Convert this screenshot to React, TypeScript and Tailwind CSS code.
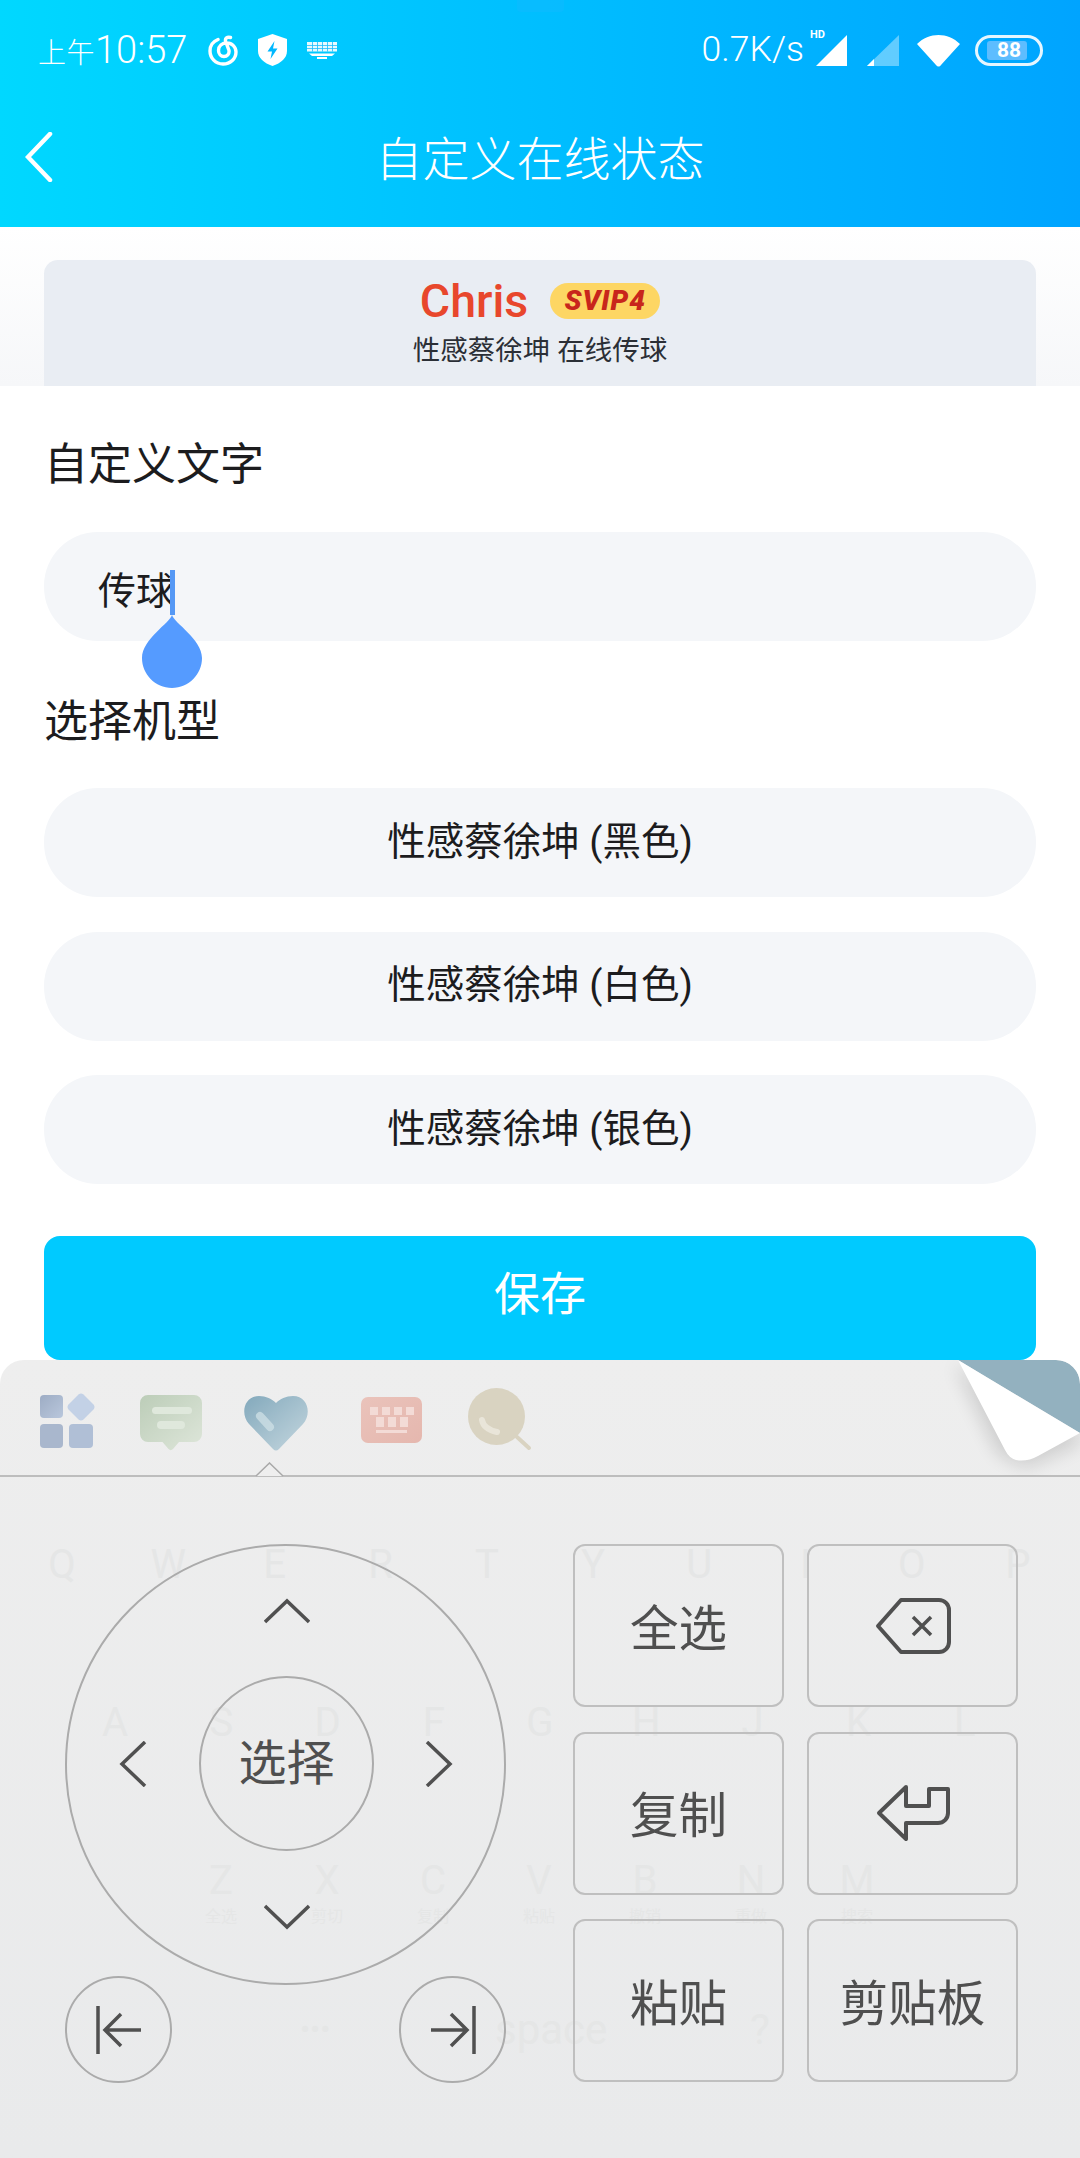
import React from 'react'

const modelRows = ['性感蔡徐坤 (黑色)', '性感蔡徐坤 (白色)', '性感蔡徐坤 (银色)']

const ghostTop = ['Q', 'W', 'E', 'R', 'T', 'Y', 'U', 'I', 'O', 'P']
const ghostMid = ['A', 'S', 'D', 'F', 'G', 'H', 'J', 'K', 'L']
const ghostBottom = [
  ['Z', '全选'],
  ['X', '剪切'],
  ['C', '复制'],
  ['V', '粘贴'],
  ['B', '撤销'],
  ['N', '重做'],
  ['M', '搜索'],
]

const StatusBar = () => (
  <div className="flex h-[100px] items-center justify-between pl-[38px] pr-[37px] text-white">
    <div className="flex items-center">
      <div className="flex w-[152px] items-baseline font-light">
        <span className="text-[28px] tracking-[0.5px]">上午</span>
        <span className="text-[38px]">10:57</span>
      </div>
      <svg className="ml-[18px]" width="30" height="31" viewBox="0 0 30 31" fill="none" stroke="#fff" strokeWidth="3.4" strokeLinecap="round">
        <path d="M10 4.500C5 6.500 2 10.500 2 16c0 7 5.500 13 13 13s13-5.500 13-12c0-5-4-9-9-9s-8.500 3-8.500 7.500c0 3.500 2.500 6 5.500 6s5.500-2.500 5-6L17.500 6c-.5-2.500 1.500-4.500 5-3.500" />
      </svg>
      <svg className="ml-[20px]" width="29" height="32" viewBox="0 0 29 32">
        <path d="M14.500 0 29 5v12c0 7-6 12-14.500 15C6 29 0 24 0 17V5z" fill="#fff" />
        <path d="M16.500 7 9.500 17.500h4.500L12.500 25l7-10.500H15z" fill="#00b8ff" />
      </svg>
      <svg className="ml-[20px]" width="30" height="17" viewBox="0 0 30 17" fill="#fff">
        <path d="M0 0h30v9.500H0z" opacity="0.9" />
        <path d="M2 11.500h26L25 14H5z" />
        <path d="M10 15h10v2H10z" />
        <path d="M0 3h30v.8H0zM0 6h30v.8H0zM5 0h.8v9.500H5zM10 0h.8v9.500H10zM15 0h.8v9.500H15zM20 0h.8v9.500H20zM25 0h.8v9.500H25z" fill="#19bcff" />
      </svg>
    </div>
    <div className="flex items-center">
      <span className="text-[35.500px] font-light">0.7K/s</span>
      <div className="relative ml-[12px] h-[31px] w-[31px]">
        <span className="absolute left-[-6px] top-[-6px] text-[11px] font-bold leading-none">HD</span>
        <svg width="31" height="31" viewBox="0 0 31 31" fill="#fff">
          <path d="M31 0v31H0z" />
        </svg>
      </div>
      <svg className="ml-[20px]" width="32" height="31" viewBox="0 0 32 31">
        <path d="M32 0v31H0z" fill="#fff" opacity="0.38" />
        <path d="M7 24v7H0z" fill="#fff" />
      </svg>
      <svg className="ml-[18px]" width="43" height="33" viewBox="0 0 43 33" fill="#fff">
        <path d="M0 10C12-2 31-2 43 10L24 31c-1.500 2-3.500 2-5 0z" />
      </svg>
      <div className="relative ml-[15px] flex h-[31px] w-[68px] items-center justify-center rounded-full border-[3px] border-white/90">
        <div className="absolute bottom-[3px] left-[9px] top-[3px] w-[40px] rounded-[3px] bg-[#5dbdff]" />
        <span className="relative text-[21px] font-bold leading-none">88</span>
      </div>
    </div>
  </div>
)

const Form = () => (
  <div className="flex flex-col px-[44px]">
    <div className="mt-[49px] h-[60px] text-[44px] leading-[60px] text-[#1c1c1e]">自定义文字</div>
    <div className="relative mt-[37px] flex h-[109px] items-center rounded-[54px] bg-[#f4f6f9] pl-[54px] pt-[10px] text-[38px] text-[#1c1c1e]">
      <span>传球</span>
      <div className="absolute left-[126px] top-[38px] h-[45px] w-[5px] bg-[#5598f5]" />
      <svg className="absolute left-[98px] top-[83px]" width="60" height="73" viewBox="0 0 60 73" fill="#559bff">
        <path d="M30 0C32 8 60 24 60 43c0 16-13 30-30 30S0 59 0 43C0 24 28 8 30 0z" />
      </svg>
    </div>
    <div className="mt-[51px] h-[60px] text-[44px] leading-[60px] text-[#1c1c1e]">选择机型</div>
    <div className="mt-[36px] flex flex-col gap-[34.500px]">
      {modelRows.map((name) => (
        <div key={name} className="flex h-[109px] items-center justify-center rounded-[54px] bg-[#f4f6f9] pb-[2px] text-[38.500px] text-[#1c1c1e]">
          {name}
        </div>
      ))}
    </div>
    <div className="mt-[52px] flex h-[124px] items-center justify-center rounded-[16px] bg-[#00caff] pb-[8px] text-[46px] text-white">保存</div>
  </div>
)

const TabIcons = () => (
  <div className="flex h-[115px] items-start pl-[38px] pt-[26px]">
    <svg width="60" height="64" viewBox="0 0 60 64">
      <defs>
        <linearGradient id="grid" x1="0" y1="0" x2="1" y2="1">
          <stop offset="0" stopColor="#9dacc4" />
          <stop offset="1" stopColor="#b9c7dc" />
        </linearGradient>
      </defs>
      <rect x="2" y="9" width="23" height="23" rx="4" fill="url(#grid)" />
      <path d="M40.500 8.500a4 4 0 0 1 5 0l10 10a4 4 0 0 1 0 5l-10 10a4 4 0 0 1-5 0l-10-10a4 4 0 0 1 0-5z" fill="#c3d1e6" />
      <rect x="2" y="38" width="23" height="24" rx="4" fill="#a9b7cd" />
      <rect x="31" y="38" width="24" height="24" rx="4" fill="#b0bfd6" />
    </svg>
    <svg className="ml-[42px]" width="62" height="66" viewBox="0 0 62 66">
      <defs>
        <linearGradient id="chat" x1="0" y1="0" x2="1" y2="1">
          <stop offset="0" stopColor="#bccdb8" />
          <stop offset="1" stopColor="#dee6da" />
        </linearGradient>
      </defs>
      <path d="M8 9h46a8 8 0 0 1 8 8v31a8 8 0 0 1-8 8H39l-6 7c-1.500 1.500-3 1.500-4.500 0l-6-7H8a8 8 0 0 1-8-8V17a8 8 0 0 1 8-8z" fill="url(#chat)" />
      <rect x="12" y="21" width="40" height="7" rx="3.500" fill="#dfe8dc" />
      <rect x="17" y="35" width="28" height="8" rx="4" fill="#dfe8dc" />
    </svg>
    <svg className="ml-[42px]" width="64" height="66" viewBox="0 0 64 66">
      <defs>
        <linearGradient id="heart" x1="0" y1="0" x2="1" y2="1">
          <stop offset="0" stopColor="#83a9bc" />
          <stop offset="1" stopColor="#c5d7df" />
        </linearGradient>
      </defs>
      <path d="M29 63 5 38C-4 28 0 10 15 10c7 0 13 3 17 7 4-4 10-7 17-7 15 0 19 18 10 28L35 63c-2 2-4 2-6 0z" fill="url(#heart)" />
      <path d="M16 30 26 41" stroke="#cfe0e6" strokeOpacity="0.75" strokeWidth="8" strokeLinecap="round" />
    </svg>
    <svg className="ml-[53px]" width="62" height="62" viewBox="0 0 62 62">
      <defs>
        <linearGradient id="keys" x1="0" y1="0" x2="1" y2="1">
          <stop offset="0" stopColor="#eac3bb" />
          <stop offset="1" stopColor="#e5b7ae" />
        </linearGradient>
      </defs>
      <rect x="0" y="11" width="61" height="46" rx="7" fill="url(#keys)" />
      <path d="M9 21h8v8H9zM21 21h8v8h-8zM33 21h8v8h-8zM45 21h8v8h-8zM15 31h8v10h-8zM27 31h8v10h-8zM39 31h8v10h-8zM15 44h31v3H15z" fill="#f3dbd6" />
    </svg>
    <svg className="ml-[45px]" width="64" height="66" viewBox="0 0 64 66">
      <circle cx="28.500" cy="30.500" r="28.500" fill="#d9d3c1" />
      <path d="M49 51 61 62" stroke="#d9d3c1" strokeWidth="4" strokeLinecap="round" />
      <path d="M14 34c1 6 6 10 15 12" stroke="#e9e5d9" strokeWidth="6" fill="none" strokeLinecap="round" />
    </svg>
  </div>
)

const PageCurl = () => (
  <svg className="absolute right-0 top-0" width="170" height="116" viewBox="-30 0 170 116">
    <defs>
      <filter id="curlBlur" x="-40%" y="-40%" width="180%" height="180%">
        <feGaussianBlur stdDeviation="9" />
      </filter>
    </defs>
    <path d="M14 4 58 94l28 14 54-24V73z" fill="#000" opacity="0.13" filter="url(#curlBlur)" />
    <path d="M18 0H116a24 24 0 0 1 24 24V73z" fill="#93b1bf" />
    <path d="M18 0 140 73 98 96Q87 102 76 100 69 98 65 90z" fill="#fff" />
  </svg>
)

const Chevron = ({ d, w, h }: { d: string; w: number; h: number }) => (
  <svg width={w} height={h} viewBox={`0 0 ${w} ${h}`} fill="none" stroke="#505050" strokeWidth="3.500">
    <path d={d} />
  </svg>
)

const DirectionPad = () => (
  <div className="w-[441px]">
    <div className="grid h-[441px] w-[441px] grid-cols-[132px_175px_130px] grid-rows-[130px_175px_132px] items-center justify-items-center rounded-full border-2 border-[#ababab]">
      <div />
      <Chevron w={46} h={26} d="M1 24 23 3l22 21" />
      <div />
      <Chevron w={28} h={46} d="M26 1 3 23l23 22" />
      <div className="flex h-[175px] w-[175px] items-center justify-center rounded-full border-2 border-[#ababab] text-[48px] text-[#4f4f4f]">选择</div>
      <Chevron w={28} h={46} d="M2 1l23 22L2 45" />
      <div />
      <Chevron w={46} h={26} d="M1 2l22 21L45 2" />
      <div />
    </div>
    <div className="mt-[-9px] flex justify-between">
      <div className="flex h-[107px] w-[107px] items-center justify-center rounded-full border-2 border-[#ababab]">
        <svg width="46" height="48" viewBox="0 0 46 48" fill="none" stroke="#505050" strokeWidth="3.500">
          <path d="M2 0v48M45 24H9M25 8 9 24l16 16" />
        </svg>
      </div>
      <div className="flex h-[107px] w-[107px] items-center justify-center rounded-full border-2 border-[#ababab]">
        <svg width="46" height="48" viewBox="0 0 46 48" fill="none" stroke="#505050" strokeWidth="3.500">
          <path d="M44 0v48M1 24h36M21 8l16 16-16 16" />
        </svg>
      </div>
    </div>
  </div>
)

const EditKey = ({ children, text }: { children: React.ReactNode; text?: boolean }) => (
  <div className={text ? 'flex h-[163px] w-[211px] items-center justify-center rounded-[12px] border-2 border-[#bfbfbf] pt-[9px] text-[48.500px] text-[#4f4f4f]' : 'flex h-[163px] w-[211px] items-center justify-center rounded-[12px] border-2 border-[#bfbfbf]'}>
    {children}
  </div>
)

const EditKeys = () => (
  <div className="grid grid-cols-[211px_211px] gap-x-[23px] gap-y-[24px]">
    <EditKey text>全选</EditKey>
    <EditKey>
      <svg width="76" height="56" viewBox="0 0 76 56" fill="none" stroke="#505050" strokeWidth="4" strokeLinejoin="round">
        <path d="M26 2h38a10 10 0 0 1 10 10v32a10 10 0 0 1-10 10H26L3 28z" />
        <path d="M38 19l18 18M56 19 38 37" strokeWidth="3.500" />
      </svg>
    </EditKey>
    <EditKey text>复制</EditKey>
    <EditKey>
      <svg width="74" height="58" viewBox="0 0 74 58" fill="none" stroke="#505050" strokeWidth="4" strokeLinejoin="round">
        <path d="M30 3 3 29l27 26V39h32a10 10 0 0 0 10-10V5H53v17H30z" />
      </svg>
    </EditKey>
    <EditKey text>粘贴</EditKey>
    <EditKey text>剪贴板</EditKey>
  </div>
)

const GhostKeys = () => (
  <div className="absolute inset-x-0 top-[183px] text-[#e5e6e6]">
    <div className="grid h-[44px] grid-cols-10 px-[9px] text-center text-[40px] leading-[44px]">
      {ghostTop.map((k) => (
        <span key={k}>{k}</span>
      ))}
    </div>
    <div className="mt-[114px] grid h-[44px] grid-cols-9 px-[62px] text-center text-[40px] leading-[44px]">
      {ghostMid.map((k) => (
        <span key={k}>{k}</span>
      ))}
    </div>
    <div className="mt-[114px] grid grid-cols-7 pl-[168px] pr-[170px] text-center">
      {ghostBottom.map(([k, sub]) => (
        <div key={k} className="flex flex-col">
          <span className="text-[40px] leading-[44px]">{k}</span>
          <span className="mt-[4px] text-[16px] leading-[20px]">{sub}</span>
        </div>
      ))}
    </div>
    <div className="mt-[78px] flex items-center pl-[300px] text-[42px] leading-[50px]">
      <span className="w-[195px] text-[30px]">•••</span>
      <span className="w-[255px]">space</span>
      <span>?</span>
    </div>
  </div>
)

const Keyboard = () => (
  <div className="relative flex-1 overflow-hidden rounded-t-[24px] bg-linear-to-b from-[#eeeeee] to-[#e9eaeb]">
    <GhostKeys />
    <div className="relative">
      <TabIcons />
      <div className="h-[2px] bg-[#bdbdbd]" />
      <svg className="absolute left-[255px] top-[102px]" width="30" height="15" viewBox="0 0 30 15">
        <path d="M1 14 14.500 1 28 14" fill="#eeeeee" stroke="#a9a9a9" strokeWidth="1.500" />
      </svg>
      <div className="flex justify-between pl-[65px] pr-[62px] pt-[67px]">
        <DirectionPad />
        <EditKeys />
      </div>
    </div>
    <PageCurl />
  </div>
)

export default function App() {
  return (
    <div className="flex h-[2158px] w-[1080px] flex-col overflow-hidden bg-white font-['Roboto','Noto_Sans_CJK_SC',sans-serif]">
      <div className="relative h-[227px] bg-linear-to-r from-[#00d8ff] to-[#00a4ff]">
        <div className="absolute left-[517px] top-0 h-[12px] w-[47px] rounded-b-[4px] bg-[#2ab4ff]/20" />
        <StatusBar />
        <div className="relative flex h-[120px] items-center justify-center text-[47px] font-light text-white">
          <svg className="absolute left-[25px] top-[32px]" width="28" height="50" viewBox="0 0 28 50" fill="none" stroke="#fff" strokeWidth="4.500" strokeLinecap="round">
            <path d="M25 2 3 25l22 23" />
          </svg>
          自定义在线状态
        </div>
      </div>
      <div className="h-[159px] bg-linear-to-b from-white to-[#f6f7f9] px-[44px] pt-[33px]">
        <div className="flex h-[126px] flex-col items-center rounded-t-[14px] bg-[#e9edf3]">
          <div className="mt-[16px] flex h-[50px] items-center">
            <span className="text-[46.500px] font-medium leading-[50px] text-[#e8472c]">Chris</span>
            <span className="ml-[22px] flex h-[36px] w-[110px] items-center justify-center rounded-full bg-[#fdd663] text-[28px] font-black italic tracking-[1px] text-[#c8261c]">SVIP4</span>
          </div>
          <div className="mt-[7px] text-[27.500px] leading-[36px] text-[#2b2f36]">性感蔡徐坤 在线传球</div>
        </div>
      </div>
      <Form />
      <Keyboard />
    </div>
  )
}
